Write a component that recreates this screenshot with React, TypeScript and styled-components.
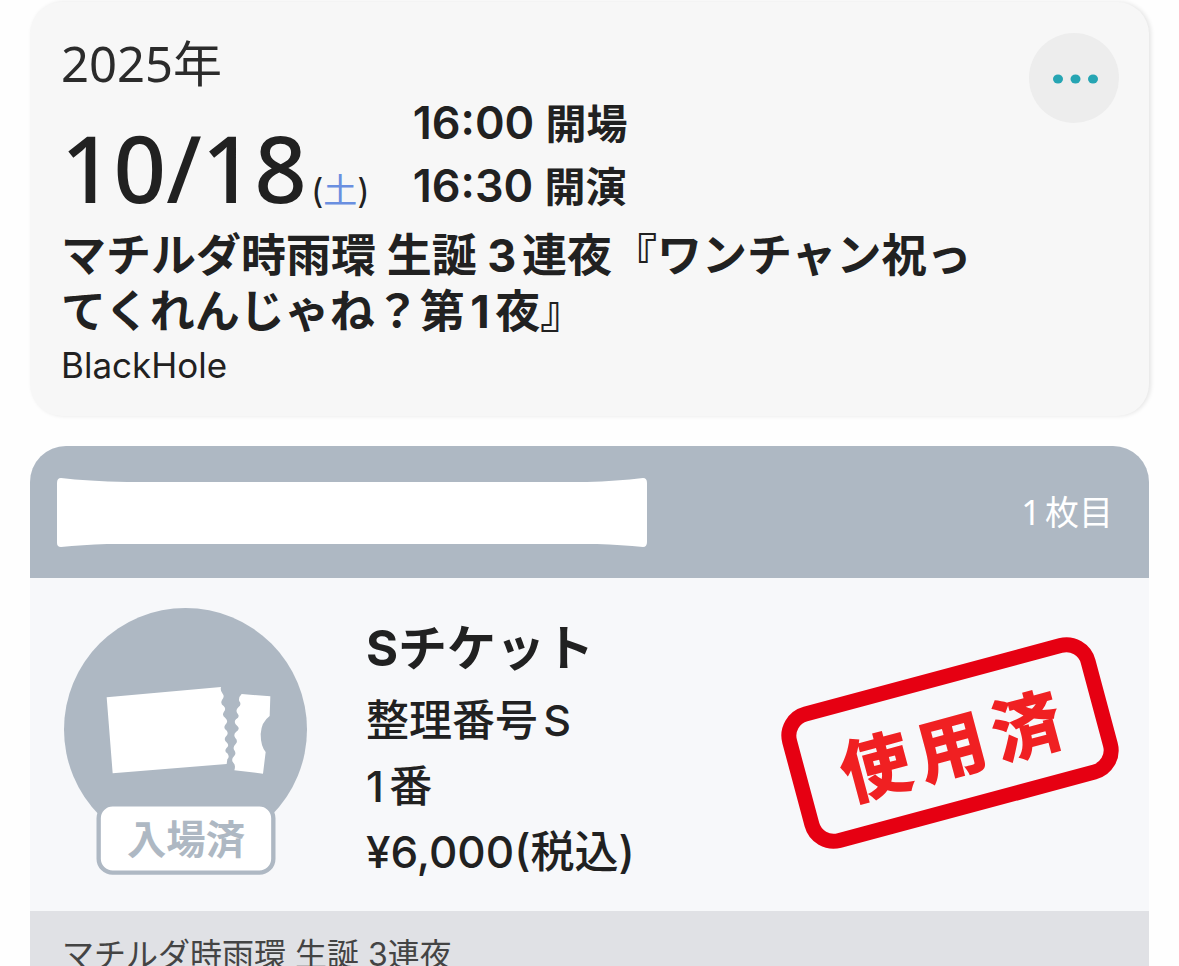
import React from "react";
import styled, { createGlobalStyle } from "styled-components";

const GlobalStyle = createGlobalStyle`
  *, *::before, *::after { box-sizing: border-box; }
  body {
    margin: 0;
    background: #fefefe;
    color: #212121;
    font-family: Inter, "Noto Sans CJK JP", sans-serif;
  }
  h1, h2, p { margin: 0; }
`;

const Screen = styled.main`
  display: flex;
  flex-direction: column;
  gap: 30px;
  height: 100vh;
  padding: 2px 30px 0;
  overflow-y: auto;
  scrollbar-width: none;
`;

const EventCard = styled.section`
  display: flex;
  flex-direction: column;
  flex: none;
  padding: 31px 30px 26px 31px;
  border-radius: 32px;
  background: #f7f7f7;
  box-shadow: 2px 0 4px rgba(0, 0, 0, 0.1);
`;

const EventTop = styled.div`
  display: flex;
  justify-content: space-between;
  align-items: flex-start;
`;

const Schedule = styled.div`
  display: flex;
  align-items: flex-end;
  gap: 43px;
`;

const DateBlock = styled.div`
  padding-bottom: 8px;
  font-family: "Noto Sans", "Noto Sans CJK JP", sans-serif;
`;

const Year = styled.p`
  font-size: 49px;
  line-height: 60px;
  color: #2b2b2b;
`;

const Day = styled.p`
  margin-top: 34px;
  font-size: 92px;
  font-weight: 500;
  line-height: 82px;
  white-space: nowrap;
`;

const Weekday = styled.span`
  margin-left: 4px;
  font-family: Inter, "Noto Sans CJK JP", sans-serif;
  font-size: 34px;
  font-weight: 400;
  line-height: 34px;
`;

const Saturday = styled.span`
  color: #6a8fe0;
`;

const Times = styled.div`
  display: flex;
  flex-direction: column;
`;

const Time = styled.p`
  font-size: 45px;
  font-weight: 600;
  line-height: 63px;
  white-space: nowrap;
`;

const TimeLabel = styled.span`
  font-size: 41px;
  line-height: 41px;
`;

const MoreButton = styled.button`
  display: flex;
  align-items: center;
  justify-content: center;
  width: 90px;
  height: 90px;
  padding: 2px 0 0 3px;
  border: 0;
  border-radius: 50%;
  background: #ededed;
  color: #26a5b3;
  cursor: pointer;
`;

const Title = styled.h1`
  margin-top: 11px;
  padding-right: 120px;
  font-size: 45px;
  font-weight: 700;
  line-height: 56px;
  text-autospace: normal;
`;

const Venue = styled.p`
  font-size: 35px;
  line-height: 50px;
`;

const TicketCard = styled.section`
  flex: none;
  border-radius: 36px 36px 0 0;
  background: #f7f8fa;
  overflow: hidden;
`;

const TicketHeader = styled.header`
  display: flex;
  align-items: center;
  justify-content: space-between;
  height: 132px;
  padding: 0 36px 0 27px;
  background: #aeb8c3;
  color: #ffffff;
`;

const SheetNumber = styled.p`
  font-family: "Noto Sans", "Noto Sans CJK JP", sans-serif;
  font-size: 34px;
  line-height: 48px;
  text-autospace: normal;
`;

const TicketBody = styled.div`
  display: flex;
  align-items: flex-start;
  padding: 30px 34px 26px;
`;

const TicketInfo = styled.div`
  flex: 1;
  padding: 3px 0 0 59px;
`;

const TicketName = styled.h2`
  font-size: 49px;
  font-weight: 700;
  line-height: 76px;
`;

const TicketLine = styled.p`
  font-size: 43px;
  font-weight: 500;
  line-height: 66px;
  text-autospace: normal;
`;

const PriceLine = styled(TicketLine)`
  font-size: 44px;
  text-autospace: no-autospace;
`;

const Stamp = styled.div`
  display: flex;
  align-items: center;
  justify-content: center;
  gap: 8px;
  width: 324px;
  height: 146px;
  margin: 62px 3px 0 0;
  border: 15px solid #e60012;
  border-radius: 30px;
  color: #f02022;
  font-family: "Noto Sans CJK JP", sans-serif;
  font-size: 70px;
  font-weight: 900;
  line-height: 100px;
  transform: rotate(-15deg);
`;

const TicketFooter = styled.footer`
  padding: 20px 32px;
  background: #e0e1e5;
  color: #444444;
  font-size: 32px;
  line-height: 48px;
`;

const MoreIcon = () => (
  <svg width="46" height="10" viewBox="0 0 46 10" fill="currentColor" aria-hidden="true">
    <ellipse cx="5" cy="5" rx="5" ry="4.5" />
    <ellipse cx="22.5" cy="5" rx="5" ry="4.5" />
    <ellipse cx="40" cy="5" rx="5" ry="4.5" />
  </svg>
);

const HiddenName = () => (
  <svg width="590" height="69" viewBox="0 0 590 69" fill="#ffffff" aria-hidden="true">
    <path d="M4 0 Q30 3 70 4 H530 Q560 3 586 0 Q590 0 590 5 V64 Q590 69 586 69 Q565 67 540 66 H50 Q25 67 4 69 Q0 69 0 65 V5 Q0 0 4 0Z" />
  </svg>
);

const EnteredBadge = () => (
  <svg width="243" height="267" viewBox="72 54 729 801" role="img" aria-label="入場済">
    <circle cx="436.500" cy="418.500" r="364.500" fill="#aeb8c3" />
    <path
      fill="#ffffff"
      d="M200 322 L543 291 Q540 303 548 311 Q555 320 546 330 Q540 341 551 348 Q560 357 551 367 Q545 377 556 384 Q567 394 556 404 Q549 414 559 421 Q568 431 557 440 Q550 450 561 458 Q569 467 559 475 Q552 484 562 490 Q570 500 562 508 L560 522 L218 550Z"
    />
    <path
      fill="#ffffff"
      d="M605 312 L691 319 L689 378 Q664 396 662 432 Q662 468 677 486 L669 551 L583 541 Q588 526 580 518 Q572 509 582 499 Q590 491 583 481 Q577 471 587 462 Q595 453 586 444 Q579 434 588 426 Q602 417 592 408 Q579 398 588 388 Q601 380 593 371 Q585 361 595 352 Q606 344 598 334 Q594 323 605 312Z"
    />
    <rect x="176" y="643" width="524" height="205" rx="42" fill="#ffffff" stroke="#aeb8c3" strokeWidth="13" />
    <text
      x="438"
      y="792"
      textAnchor="middle"
      fill="#aeb8c3"
      fontFamily="'Noto Sans CJK JP', sans-serif"
      fontSize="118"
      fontWeight="700"
    >
      入場済
    </text>
  </svg>
);

export default function App() {
  return (
    <>
      <GlobalStyle />
      <Screen lang="ja">
        <EventCard>
          <EventTop>
            <Schedule>
              <DateBlock>
                <Year>2025年</Year>
                <Day>
                  10/18
                  <Weekday>
                    (<Saturday>土</Saturday>)
                  </Weekday>
                </Day>
              </DateBlock>
              <Times>
                <Time>
                  16:00 <TimeLabel>開場</TimeLabel>
                </Time>
                <Time>
                  16:30 <TimeLabel>開演</TimeLabel>
                </Time>
              </Times>
            </Schedule>
            <MoreButton type="button" aria-label="メニュー">
              <MoreIcon />
            </MoreButton>
          </EventTop>
          <Title>マチルダ時雨環 生誕 3連夜『ワンチャン祝ってくれんじゃね？第1夜』</Title>
          <Venue>BlackHole</Venue>
        </EventCard>
        <TicketCard>
          <TicketHeader>
            <HiddenName />
            <SheetNumber>1枚目</SheetNumber>
          </TicketHeader>
          <TicketBody>
            <EnteredBadge />
            <TicketInfo>
              <TicketName>Sチケット</TicketName>
              <TicketLine>整理番号S</TicketLine>
              <TicketLine>1番</TicketLine>
              <PriceLine>¥6,000(税込)</PriceLine>
            </TicketInfo>
            <Stamp>
              <span>使</span>
              <span>用</span>
              <span>済</span>
            </Stamp>
          </TicketBody>
          <TicketFooter>マチルダ時雨環 生誕 3連夜</TicketFooter>
        </TicketCard>
      </Screen>
    </>
  );
}
